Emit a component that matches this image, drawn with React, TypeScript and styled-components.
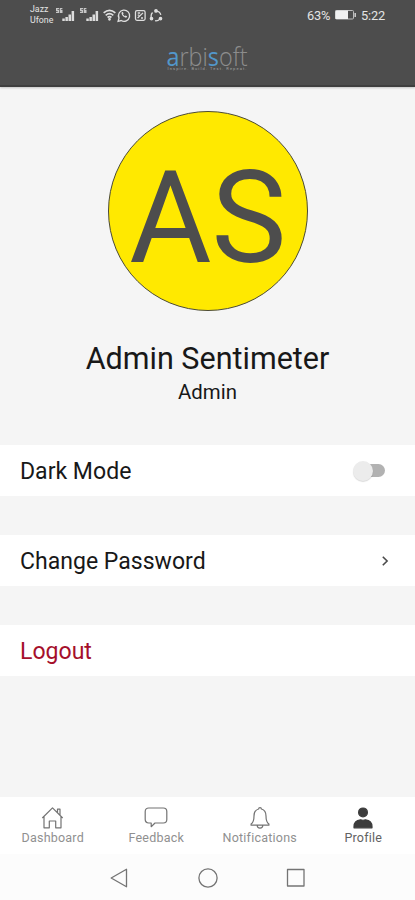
import React from "react";
import styled, { createGlobalStyle } from "styled-components";

const Global = createGlobalStyle`
  * { box-sizing: border-box; }
  body { margin: 0; background: #f5f5f5; font-family: Roboto, "Liberation Sans", sans-serif; }
`;

const Screen = styled.div`
  width: 415px;
  height: 900px;
  display: flex;
  flex-direction: column;
  overflow: hidden;
  background: #f5f5f5;
`;

const Header = styled.header`
  height: 87px;
  flex: none;
  background: #4d4d4d;
  border-bottom: 2px solid #3f3f3f;
  box-shadow: 0 1px 2px rgba(0, 0, 0, 0.2);
`;

const StatusBar = styled.div`
  height: 30px;
  display: flex;
  justify-content: space-between;
  padding: 0 29px 0 30px;
  color: #e4e4e4;
`;

const StatusGroup = styled.div`
  display: flex;
  align-items: center;
`;

const Carrier = styled.div`
  width: 25px;
  font-size: 8.8px;
  line-height: 11px;
`;

const StatusText = styled.span<{ $width: number }>`
  width: ${(p) => p.$width}px;
  font-size: 12.8px;
  letter-spacing: -0.2px;
  white-space: nowrap;
`;

const Brand = styled.div`
  display: flex;
  flex-direction: column;
  align-items: center;
  padding-top: 14px;
`;

const BrandName = styled.div`
  font: 300 26px/24px "Open Sans", sans-serif;
  height: 22px;
  color: #8d8d8d;
  white-space: nowrap;
  transform: scaleX(0.9);
`;

const Accent = styled.span`
  color: #5297ca;
  font-weight: 400;
`;

const Tagline = styled.div`
  font-size: 4px;
  line-height: 5px;
  letter-spacing: 1.1px;
  color: #a2a2a2;
  white-space: nowrap;
`;

const Identity = styled.section`
  height: 358px;
  flex: none;
  display: flex;
  flex-direction: column;
  align-items: center;
  padding-top: 24px;
`;

const Avatar = styled.div`
  width: 200px;
  height: 200px;
  border: 1.5px solid #4b4a35;
  border-radius: 50%;
  background: #ffe900;
  color: #4d4d4d;
  display: flex;
  align-items: center;
  justify-content: center;
  font-size: 128px;
  line-height: 150px;
  padding-top: 14px;
`;

const Initials = styled.span`
  transform: scaleX(0.985);
`;

const Name = styled.h1`
  margin: 30px 0 0;
  font-size: 30.5px;
  line-height: 36px;
  font-weight: 400;
  color: #181818;
`;

const Role = styled.div`
  margin-top: 3px;
  font-size: 20.4px;
  line-height: 24px;
  color: #181818;
`;

const Settings = styled.main`
  flex: 1;
  display: flex;
  flex-direction: column;
  gap: 39px;
`;

const SettingRow = styled.div<{ $danger?: boolean }>`
  height: 51px;
  display: flex;
  align-items: center;
  justify-content: space-between;
  padding: 1px 23px 0 20px;
  background: #fff;
  font-size: 23.05px;
  color: ${(p) => (p.$danger ? "#a50f2b" : "#181818")};
`;

const Track = styled.div`
  width: 27px;
  height: 13px;
  border-radius: 7px;
  background: #b2b2b2;
  display: flex;
  align-items: center;
  margin: -1px 7px 0 0;
`;

const Thumb = styled.div`
  width: 20px;
  height: 20px;
  flex: none;
  border-radius: 50%;
  background: #ececec;
  box-shadow: 0 1px 1px rgba(0, 0, 0, 0.15);
  margin-left: -5px;
`;

const TabBar = styled.nav`
  height: 57px;
  flex: none;
  display: grid;
  grid-template-columns: repeat(4, 1fr);
  background: #fff;
  padding-left: 1px;
`;

const Tab = styled.div<{ $active?: boolean }>`
  display: flex;
  flex-direction: column;
  align-items: center;
  padding-top: 9px;
  color: ${(p) => (p.$active ? "#3c3c3c" : "#737373")};
`;

const TabLabel = styled.span<{ $active?: boolean }>`
  font-size: 12.5px;
  line-height: 16px;
  letter-spacing: 0.22px;
  color: ${(p) => (p.$active ? "#626262" : "#909090")};
`;

const SystemNav = styled.div`
  height: 46px;
  flex: none;
  display: flex;
  align-items: center;
  justify-content: center;
  gap: 66px;
  background: #fcfcfc;
  padding-top: 2px;
`;

const Signal = () => (
  <svg width="24" height="18" viewBox="0 0 24 18" fill="#dcdcdc">
    <path d="M1 2h3v1.300H2.400v.7H4v3H1V5.700h1.700V5H1zM4.700 2h2.700v1.200H5.900v.7h1.600V7H4.700z" opacity=".85" />
    <path d="M7.300 12.500h2.500V15H7.300zM10.400 11h2.500v4h-2.500zM13.500 8.500H16V15h-2.500zM16.600 5h2.500v10h-2.500z" />
  </svg>
);

const Wifi = () => (
  <svg width="13" height="14" viewBox="0 0 14 14" fill="none" stroke="#e0e0e0" strokeWidth="1.800">
    <path d="M.7 4.600Q7-.8 13.300 4.600M2.900 7.300Q7 3.900 11.100 7.300M4.900 9.700Q7 8 9.100 9.700" />
    <circle cx="7" cy="11.700" r=".6" fill="#e0e0e0" />
  </svg>
);

const StatusIcons = () => (
  <svg width="48" height="15" viewBox="0 0 48 15" fill="none" stroke="#dedede" strokeWidth="1.300">
    <path d="M2.100 13.300l.9-3.200A5.600 5.600 0 1 1 5.200 12.500z" />
    <path d="M5.800 4.200c-1.200 2 2.300 5.800 4.700 5.400l.7-1.300-1.700-.9-.7.800-1.900-1.900.7-.8-.7-1.500z" fill="#dedede" stroke="none" />
    <rect x="19.500" y="2.700" width="9.600" height="9.600" rx="1.500" />
    <path d="M21.600 10L27 4.900M21.700 5h2.500M25 10h2M21.700 7.200h1.500" />
    <circle cx="40" cy="7.900" r="4.900" strokeDasharray="6 4.260" strokeDashoffset="-2.500" />
    <circle cx="40" cy="2.900" r="1.200" fill="#dedede" />
    <circle cx="35.500" cy="10.600" r="1.200" fill="#dedede" />
    <circle cx="44.500" cy="10.600" r="1.200" fill="#dedede" />
  </svg>
);

const Battery = () => (
  <svg width="27" height="12" viewBox="0 0 27 12">
    <rect x="1.500" y="1.500" width="18" height="8.500" rx="1" fill="none" stroke="#bdbdbd" />
    <rect x="1.500" y="1.500" width="12.500" height="8.500" fill="#f1f1f1" />
    <path d="M21.200 4v4" stroke="#cfcfcf" strokeWidth="1.500" />
  </svg>
);

const Chevron = () => (
  <svg width="13" height="14" viewBox="0 0 13 14" fill="none" stroke="#4a4a4a" strokeWidth="1.600">
    <path d="M3.800 2.700L8.100 7l-4.300 4.300" />
  </svg>
);

const TabIcon = ({ children }: { children: React.ReactNode }) => (
  <svg width="24" height="24" viewBox="0 0 24 24" fill="none" stroke="currentColor" strokeWidth="1.200" strokeLinejoin="round">
    {children}
  </svg>
);

const HomeIcon = () => (
  <TabIcon>
    <path d="M1.300 12L11.500 1.800 21.700 12M16.500 6.500V3.200H19v6M3 10.500v11.300h5.300V15h6.400v6.800H20V10.500" />
  </TabIcon>
);
const ChatIcon = () => (
  <TabIcon>
    <path d="M4.700 2h14.600a3.500 3.500 0 0 1 3.500 3.500v8a3.500 3.500 0 0 1-3.500 3.500H11l-3.800 3.700V17H4.700a3.500 3.500 0 0 1-3.500-3.500v-8A3.500 3.500 0 0 1 4.700 2z" />
  </TabIcon>
);
const BellIcon = () => (
  <TabIcon>
    <path d="M10.600 3a1.400 1.400 0 0 1 2.800 0c3.100.8 4.600 3.300 4.600 7 0 4.700.8 6.600 2.900 8.100v1.100H3.100v-1.100C5.200 16.600 6 14.700 6 10c0-3.700 1.500-6.200 4.600-7zM9.200 19.300a2.800 2.800 0 0 0 5.600 0" />
  </TabIcon>
);
const PersonIcon = () => (
  <TabIcon>
    <circle cx="12" cy="6.400" r="4.400" fill="currentColor" />
    <path d="M3 21.800v-1.300c0-3.800 2.500-6.200 6.500-6.700q2.500.9 5 0c4 .5 6.500 2.900 6.500 6.700v1.300z" fill="currentColor" />
  </TabIcon>
);

const NavIcon = ({ children }: { children: React.ReactNode }) => (
  <svg width="22" height="22" viewBox="0 0 22 22" fill="none" stroke="#747474" strokeWidth="1.300" strokeLinejoin="round">
    {children}
  </svg>
);

const tabs = [
  { label: "Dashboard", icon: <HomeIcon /> },
  { label: "Feedback", icon: <ChatIcon /> },
  { label: "Notifications", icon: <BellIcon /> },
  { label: "Profile", icon: <PersonIcon />, active: true },
];

export default function App() {
  return (
    <Screen>
      <Global />
      <Header>
        <StatusBar>
          <StatusGroup>
            <Carrier>Jazz<br />Ufone</Carrier>
            <Signal />
            <Signal />
            <Wifi />
            <StatusIcons />
          </StatusGroup>
          <StatusGroup>
            <StatusText $width={27}>63%</StatusText>
            <Battery />
            <StatusText $width={25}>5:22</StatusText>
          </StatusGroup>
        </StatusBar>
        <Brand>
          <BrandName><Accent>a</Accent>rbi<Accent>s</Accent>oft</BrandName>
          <Tagline>Inspire. Build. Test. Repeat.</Tagline>
        </Brand>
      </Header>
      <Identity>
        <Avatar><Initials>AS</Initials></Avatar>
        <Name>Admin Sentimeter</Name>
        <Role>Admin</Role>
      </Identity>
      <Settings>
        <SettingRow>Dark Mode<Track><Thumb /></Track></SettingRow>
        <SettingRow>Change Password<Chevron /></SettingRow>
        <SettingRow $danger>Logout</SettingRow>
      </Settings>
      <TabBar>
        {tabs.map((t) => (
          <Tab key={t.label} $active={t.active}>
            {t.icon}
            <TabLabel $active={t.active}>{t.label}</TabLabel>
          </Tab>
        ))}
      </TabBar>
      <SystemNav>
        <NavIcon><path d="M17.500 2.200v17.600L2.200 11z" /></NavIcon>
        <NavIcon><circle cx="11" cy="11" r="9.100" /></NavIcon>
        <NavIcon><rect x="2.500" y="2.500" width="16.500" height="16.500" /></NavIcon>
      </SystemNav>
    </Screen>
  );
}
